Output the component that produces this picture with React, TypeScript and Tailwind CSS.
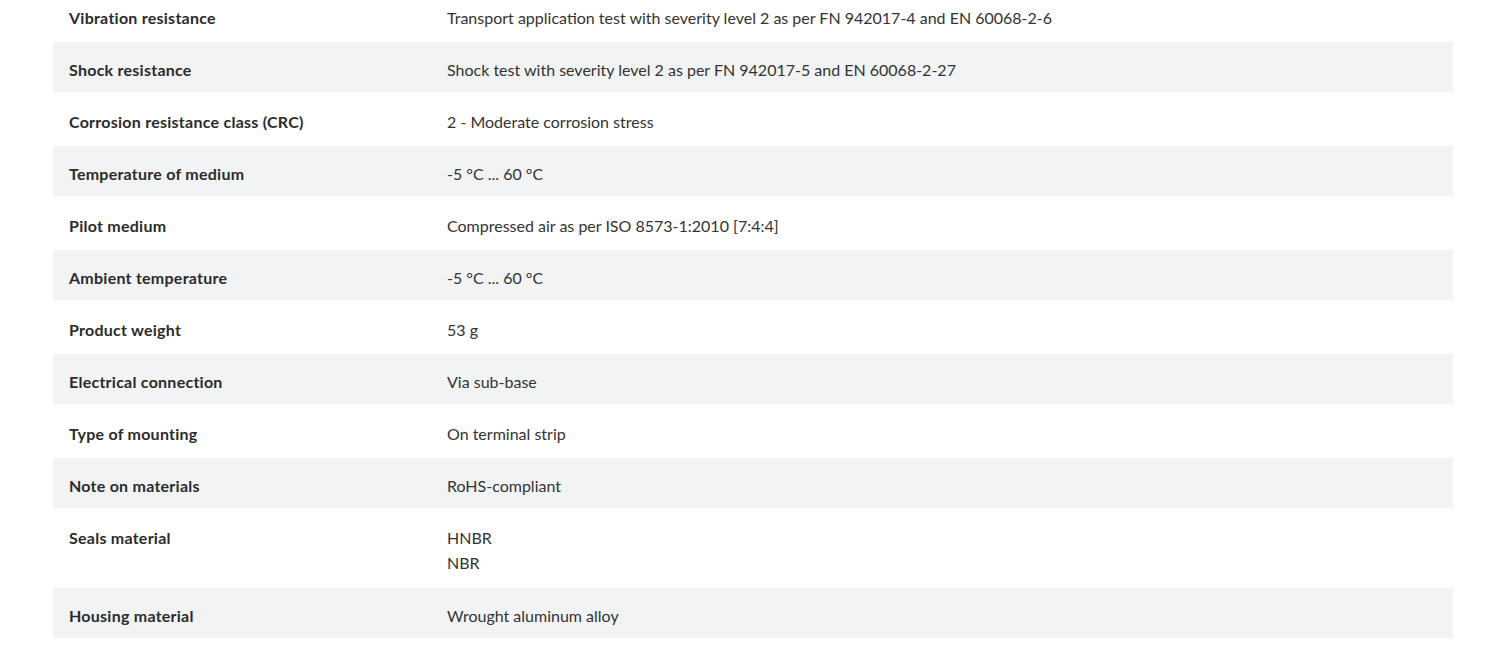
const rows: { label: string; value: string[] }[] = [
  {
    label: "Vibration resistance",
    value: [
      "Transport application test with severity level 2 as per FN 942017-4 and EN 60068-2-6",
    ],
  },
  {
    label: "Shock resistance",
    value: ["Shock test with severity level 2 as per FN 942017-5 and EN 60068-2-27"],
  },
  { label: "Corrosion resistance class (CRC)", value: ["2 - Moderate corrosion stress"] },
  { label: "Temperature of medium", value: ["-5 °C ... 60 °C"] },
  { label: "Pilot medium", value: ["Compressed air as per ISO 8573-1:2010 [7:4:4]"] },
  { label: "Ambient temperature", value: ["-5 °C ... 60 °C"] },
  { label: "Product weight", value: ["53 g"] },
  { label: "Electrical connection", value: ["Via sub-base"] },
  { label: "Type of mounting", value: ["On terminal strip"] },
  { label: "Note on materials", value: ["RoHS-compliant"] },
  { label: "Seals material", value: ["HNBR", "NBR"] },
  { label: "Housing material", value: ["Wrought aluminum alloy"] },
];

export default function App() {
  return (
    <div className="h-[653px] overflow-hidden bg-white font-['Lato',sans-serif] text-[16px] leading-[25px] text-[#333]">
      <table className="-mt-[10px] ml-[53px] w-[1400px] border-collapse">
        <tbody>
          {rows.map((row, i) => {
            // two-line cells get one extra pixel at the bottom
            const pb = row.value.length > 1 ? "pb-[11px]" : "pb-[10px]";
            return (
              <tr
                key={row.label}
                className={i % 2 === 1 ? "bg-[#f2f3f5]" : "bg-white"}
              >
                <th
                  className={`w-[394px] border-b-2 border-white pl-4 pt-[15px] text-left align-top font-bold tracking-[0.25px] text-[#2b2b2b] ${pb}`}
                >
                  {row.label}
                </th>
                <td className={`border-b-2 border-white pt-[15px] align-top ${pb}`}>
                  {row.value.map((v) => (
                    <div key={v}>{v}</div>
                  ))}
                </td>
              </tr>
            );
          })}
        </tbody>
      </table>
    </div>
  );
}
